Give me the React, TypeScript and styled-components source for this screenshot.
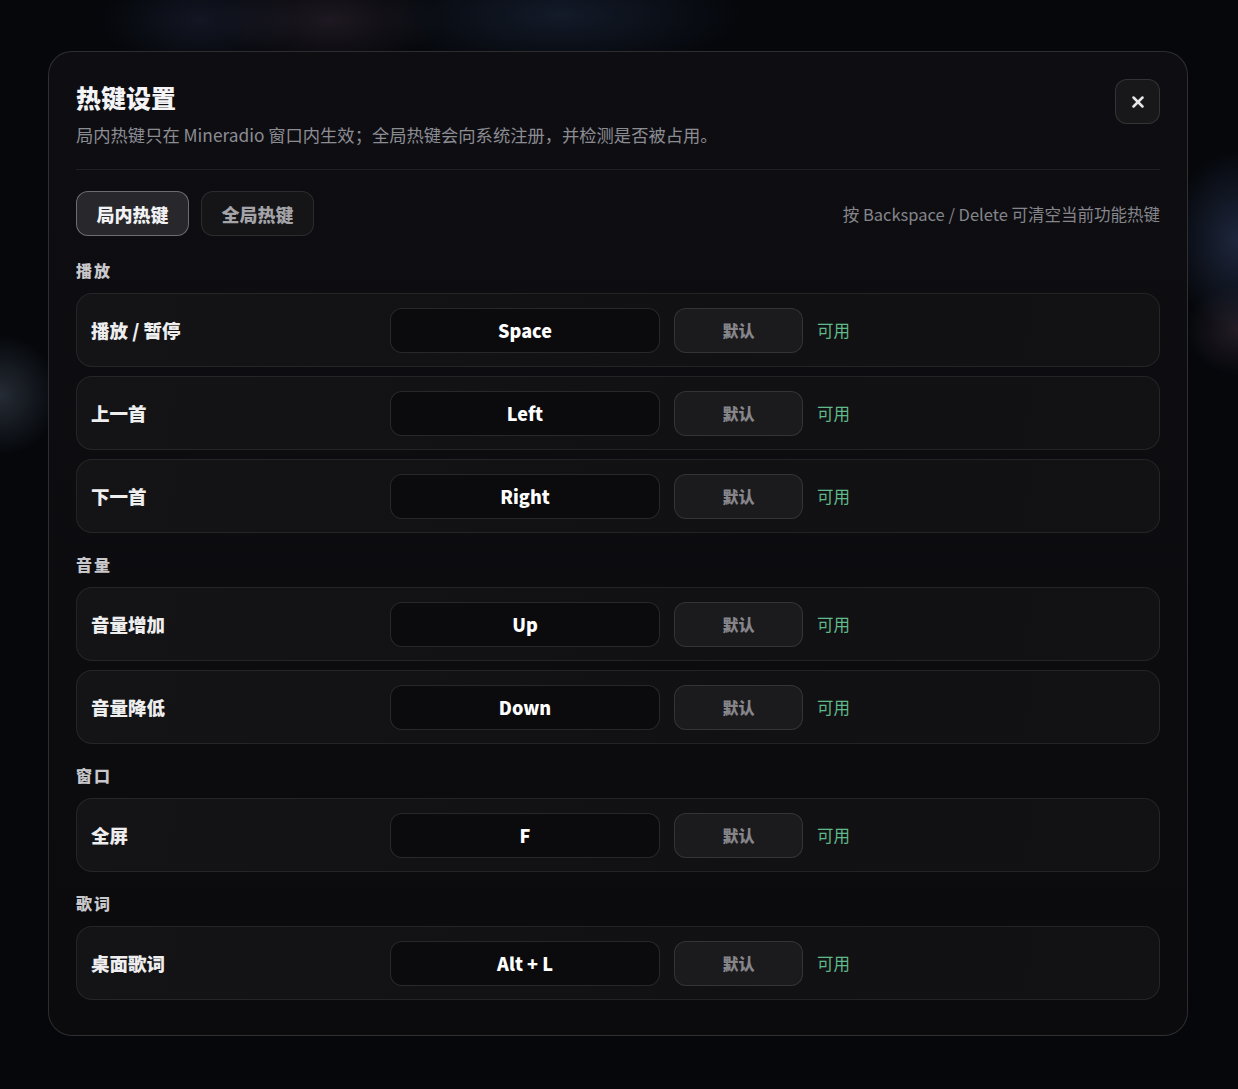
import React, { useState } from 'react';
import styled, { createGlobalStyle } from 'styled-components';
import { X } from 'lucide-react';

const GlobalStyle = createGlobalStyle`
  html, body {
    margin: 0;
    padding: 0;
    background: #05070b;
  }
  body {
    font-family: "Noto Sans CJK SC", "Noto Sans", sans-serif;
    -webkit-font-smoothing: antialiased;
  }
  * { box-sizing: border-box; }
`;

const Backdrop = styled.div`
  position: relative;
  width: 1238px;
  height: 1089px;
  overflow: hidden;
  padding: 51px 50px 0 48px;
  background:
    radial-gradient(ellipse 160px 70px at 330px 20px, rgba(60, 45, 60, 0.45), transparent 70%),
    radial-gradient(ellipse 260px 80px at 560px 15px, rgba(40, 55, 85, 0.4), transparent 70%),
    radial-gradient(ellipse 140px 70px at 200px 20px, rgba(45, 50, 80, 0.35), transparent 70%),
    radial-gradient(ellipse 80px 80px at 0px 395px, rgba(70, 80, 95, 0.5), transparent 75%),
    radial-gradient(ellipse 90px 120px at 1238px 240px, rgba(55, 70, 110, 0.5), transparent 75%),
    radial-gradient(ellipse 70px 60px at 1238px 330px, rgba(80, 60, 75, 0.4), transparent 75%),
    #05070b;
`;

const Modal = styled.section`
  width: 1140px;
  height: 985px;
  border-radius: 24px;
  border: 1px solid rgba(255, 255, 255, 0.14);
  background: linear-gradient(180deg, #0e0e12 0%, #0b0b0e 100%);
  padding: 27px 27px 0 27px;
  display: flex;
  flex-direction: column;
`;

const Header = styled.header`
  display: flex;
  justify-content: space-between;
  align-items: flex-start;
  padding-bottom: 22px;
  border-bottom: 1px solid rgba(255, 255, 255, 0.08);
`;

const TitleBlock = styled.div`
  display: flex;
  flex-direction: column;
  gap: 10px;
  padding-top: 2px;
`;

const Title = styled.h2`
  margin: 0;
  font-size: 25px;
  line-height: 32px;
  font-weight: 900;
  color: #f4f4f6;
`;

const Subtitle = styled.p`
  margin: 0;
  font-size: 17.3px;
  line-height: 24px;
  color: #8c8c93;
`;

const CloseButton = styled.button`
  width: 45px;
  height: 45px;
  border-radius: 12px;
  border: 1px solid rgba(255, 255, 255, 0.12);
  background: #18181b;
  color: #e6e6e9;
  display: flex;
  align-items: center;
  justify-content: center;
  padding: 0;
  cursor: pointer;
`;

const TabBar = styled.div`
  display: flex;
  align-items: center;
  justify-content: space-between;
  margin-top: 21px;
`;

const Tabs = styled.div`
  display: flex;
  gap: 12px;
`;

const Tab = styled.button<{ $active?: boolean }>`
  height: 45px;
  width: 113px;
  border-radius: 12px;
  font-family: inherit;
  font-size: 18px;
  font-weight: 900;
  cursor: pointer;
  border: 1px solid ${p => (p.$active ? 'rgba(255,255,255,0.32)' : 'rgba(255,255,255,0.1)')};
  background: ${p => (p.$active ? '#28282c' : '#151518')};
  color: ${p => (p.$active ? '#f2f2f4' : '#a3a3a8')};
`;

const Hint = styled.span`
  font-size: 16.5px;
  color: #85858b;
`;

const Sections = styled.div`
  display: flex;
  flex-direction: column;
  gap: 20px;
  margin-top: 23px;
`;

const Section = styled.div`
  display: flex;
  flex-direction: column;
`;

const SectionLabel = styled.div`
  font-size: 16px;
  line-height: 22px;
  font-weight: 900;
  letter-spacing: 2px;
  color: #c8c8cc;
  margin-bottom: 12px;
`;

const RowList = styled.div`
  display: flex;
  flex-direction: column;
  gap: 9px;
`;

const Row = styled.div`
  height: 74px;
  display: grid;
  grid-template-columns: 285px 270px 129px 1fr;
  column-gap: 14px;
  align-items: center;
  padding: 0 14px;
  border-radius: 16px;
  border: 1px solid rgba(255, 255, 255, 0.08);
  background: linear-gradient(100deg, #141417 0%, #111114 60%, #121215 100%);
`;

const ActionName = styled.span`
  font-size: 18.5px;
  font-weight: 900;
  color: #eeeeef;
`;

const KeyBox = styled.div`
  height: 45px;
  border-radius: 12px;
  border: 1px solid rgba(255, 255, 255, 0.12);
  background: #0b0b0e;
  display: flex;
  align-items: center;
  justify-content: center;
  font-size: 18px;
  font-weight: 900;
  color: #ffffff;
`;

const ResetButton = styled.button`
  height: 45px;
  border-radius: 12px;
  border: 1px solid rgba(255, 255, 255, 0.11);
  background: #1b1b1e;
  font-family: inherit;
  font-size: 16px;
  font-weight: 900;
  color: #86868b;
  cursor: pointer;
`;

const Status = styled.span<{ $ok: boolean }>`
  font-size: 16.5px;
  color: ${p => (p.$ok ? '#62b98a' : '#d9655d')};
`;

type Binding = { name: string; key: string; ok: boolean };
type Group = { label: string; items: Binding[] };

const localGroups: Group[] = [
  {
    label: '播放',
    items: [
      { name: '播放 / 暂停', key: 'Space', ok: true },
      { name: '上一首', key: 'Left', ok: true },
      { name: '下一首', key: 'Right', ok: true },
    ],
  },
  {
    label: '音量',
    items: [
      { name: '音量增加', key: 'Up', ok: true },
      { name: '音量降低', key: 'Down', ok: true },
    ],
  },
  {
    label: '窗口',
    items: [{ name: '全屏', key: 'F', ok: true }],
  },
  {
    label: '歌词',
    items: [{ name: '桌面歌词', key: 'Alt + L', ok: true }],
  },
];

export default function App() {
  const [tab, setTab] = useState<'local' | 'global'>('local');

  return (
    <>
      <GlobalStyle />
      <Backdrop>
        <Modal>
          <Header>
            <TitleBlock>
              <Title>热键设置</Title>
              <Subtitle>局内热键只在 Mineradio 窗口内生效；全局热键会向系统注册，并检测是否被占用。</Subtitle>
            </TitleBlock>
            <CloseButton aria-label="关闭">
              <X size={18} strokeWidth={3.4} />
            </CloseButton>
          </Header>

          <TabBar>
            <Tabs>
              <Tab $active={tab === 'local'} onClick={() => setTab('local')}>局内热键</Tab>
              <Tab $active={tab === 'global'} onClick={() => setTab('global')}>全局热键</Tab>
            </Tabs>
            <Hint>按 Backspace / Delete 可清空当前功能热键</Hint>
          </TabBar>

          <Sections>
            {localGroups.map(group => (
              <Section key={group.label}>
                <SectionLabel>{group.label}</SectionLabel>
                <RowList>
                  {group.items.map(item => (
                    <Row key={item.name}>
                      <ActionName>{item.name}</ActionName>
                      <KeyBox>{item.key}</KeyBox>
                      <ResetButton>默认</ResetButton>
                      <Status $ok={item.ok}>{item.ok ? '可用' : '冲突'}</Status>
                    </Row>
                  ))}
                </RowList>
              </Section>
            ))}
          </Sections>
        </Modal>
      </Backdrop>
    </>
  );
}
